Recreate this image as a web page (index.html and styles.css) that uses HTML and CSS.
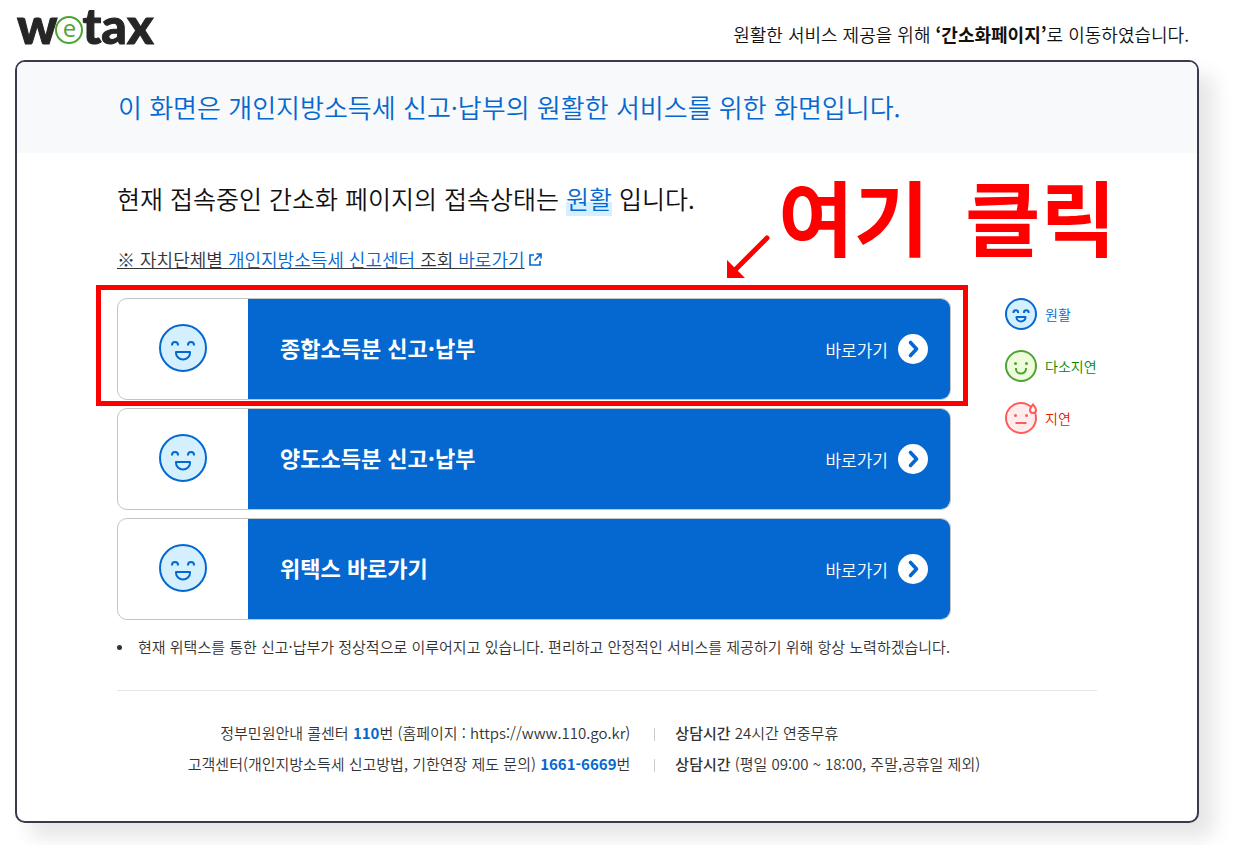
FILE: index.html
```html
<!DOCTYPE html>
<html lang="ko">
<head>
    <meta charset="UTF-8" />
    <meta name="viewport" content="width=device-width, initial-scale=1.0" />
    <title>위택스</title>
    <link rel="stylesheet" href="styles.css">
</head>
<body>

    <!-- Shared icons -->
    <svg class="defs" width="0" height="0" aria-hidden="true">
        <symbol id="face-good" viewBox="0 0 48 48">
            <circle cx="24" cy="24" r="23" fill="#d4f0ff" stroke="#0568d0" stroke-width="2" />
            <path d="M13 21.5v-.5a3 3 0 0 1 6 0v.5M29 21.5v-.5a3 3 0 0 1 6 0v.5" fill="none" stroke="#0568d0" stroke-width="2" />
            <path d="M17 28h14v1a7 6.5 0 0 1-14 0z" fill="#d4f0ff" stroke="#0568d0" stroke-width="2" stroke-linejoin="round" />
        </symbol>
        <symbol id="arrow-circle" viewBox="0 0 30 30">
            <circle cx="15" cy="15" r="15" fill="#fff" />
            <path d="M12.500 8.500l6 6.500-6 6.500" fill="none" stroke="#0568d0" stroke-width="3.600" stroke-linecap="round" stroke-linejoin="round" />
        </symbol>
    </svg>

    <!-- Header -->
    <header class="header">
        <h1 class="logo" aria-label="wetax"><span>w</span><span class="logo-e">e</span><span>tax</span></h1>
        <p class="notice">원활한 서비스 제공을 위해 <strong>‘간소화페이지’</strong>로 이동하였습니다.</p>
    </header>

    <!-- Main panel -->
    <main class="panel">
        <p class="banner">이 화면은 개인지방소득세 신고·납부의 원활한 서비스를 위한 화면입니다.</p>

        <div class="content">
            <h2 class="status">현재 접속중인 간소화 페이지의 접속상태는 <em>원활</em> 입니다.</h2>

            <a class="center-link" href="#">
                <span class="center-text">※ 자치단체별 <b>개인지방소득세 신고센터</b> 조회 <b>바로가기</b></span>
                <svg width="13" height="13" viewBox="0 0 13 13" fill="none" stroke="#0568d0" stroke-width="1.600">
                    <path d="M5 2H1v10h10V8M7.500 1H12v4.500M12 1L5.500 7.500" />
                </svg>
            </a>

            <div class="services">
                <ul class="service-list">
                    <li>
                        <a class="service" href="#">
                            <span class="service-face"><svg width="48" height="48"><use href="#face-good" /></svg></span>
                            <span class="service-body">
                                <strong>종합소득분 신고·납부</strong>
                                <span class="go">바로가기 <svg width="30" height="30"><use href="#arrow-circle" /></svg></span>
                            </span>
                        </a>
                        <div class="mark-box"></div>
                        <svg class="mark-arrow" width="45" height="45" viewBox="0 0 45 45">
                            <path d="M41 4L9 36" stroke="#f00" stroke-width="5" stroke-linecap="round" />
                            <path d="M1 26v18h18z" fill="#f00" />
                        </svg>
                        <p class="mark-text"><span>여기</span> <span>클릭</span></p>
                    </li>
                    <li>
                        <a class="service" href="#">
                            <span class="service-face"><svg width="48" height="48"><use href="#face-good" /></svg></span>
                            <span class="service-body">
                                <strong>양도소득분 신고·납부</strong>
                                <span class="go">바로가기 <svg width="30" height="30"><use href="#arrow-circle" /></svg></span>
                            </span>
                        </a>
                    </li>
                    <li>
                        <a class="service" href="#">
                            <span class="service-face"><svg width="48" height="48"><use href="#face-good" /></svg></span>
                            <span class="service-body">
                                <strong>위택스 바로가기</strong>
                                <span class="go">바로가기 <svg width="30" height="30"><use href="#arrow-circle" /></svg></span>
                            </span>
                        </a>
                    </li>
                </ul>

                <!-- Legend -->
                <ul class="legend">
                    <li class="good">
                        <svg width="32" height="32" viewBox="0 0 32 32" fill="none" stroke="#0568d0" stroke-width="2">
                            <circle cx="16" cy="16" r="15" fill="#d4f0ff" />
                            <path d="M8.500 15v-.5a2.300 2.300 0 0 1 4.600 0v.5M19 15v-.5a2.300 2.300 0 0 1 4.600 0v.5" />
                            <path d="M11.500 19h9v.5a4.500 4 0 0 1-9 0z" stroke-linejoin="round" />
                        </svg>
                        원활
                    </li>
                    <li class="slow">
                        <svg width="32" height="32" viewBox="0 0 32 32" fill="none" stroke="#4ea433" stroke-width="2">
                            <circle cx="16" cy="16" r="15" fill="#effcdb" />
                            <path d="M11 18v1a5 4.500 0 0 0 10 0v-1" />
                            <circle cx="10.500" cy="13.500" r="1.500" fill="#4ea433" stroke="none" />
                            <circle cx="21.500" cy="13.500" r="1.500" fill="#4ea433" stroke="none" />
                        </svg>
                        다소지연
                    </li>
                    <li class="delay">
                        <svg width="32" height="32" viewBox="0 0 32 32" fill="none" stroke="#ff5b5b" stroke-width="2">
                            <circle cx="16" cy="16" r="15" fill="#ffeded" />
                            <path d="M10.500 21h11" />
                            <circle cx="10.500" cy="13.500" r="1.500" fill="#ff5b5b" stroke="none" />
                            <circle cx="21.500" cy="13.500" r="1.500" fill="#ff5b5b" stroke="none" />
                            <path d="M28 2.500c-1.500 2-3 3.500-3 5.500a3 3 0 0 0 6 0c0-2-1.500-3.500-3-5.500z" fill="#fff" />
                        </svg>
                        지연
                    </li>
                </ul>
            </div>

            <p class="info">현재 위택스를 통한 신고·납부가 정상적으로 이루어지고 있습니다. 편리하고 안정적인 서비스를 제공하기 위해 항상 노력하겠습니다.</p>

            <footer class="contact">
                <p>정부민원안내 콜센터 <b>110</b>번 (홈페이지 : https://www.110.go.kr)</p>
                <p class="hours"><strong>상담시간</strong> 24시간 연중무휴</p>
                <p>고객센터(개인지방소득세 신고방법, 기한연장 제도 문의) <b>1661-6669</b>번</p>
                <p class="hours"><strong>상담시간</strong> (평일 09:00 ~ 18:00, 주말,공휴일 제외)</p>
            </footer>
        </div>
    </main>

</body>
</html>
```
FILE: styles.css
```css
* {
    margin: 0;
    padding: 0;
    box-sizing: border-box;
}

body {
    font-family: "Noto Sans CJK KR", sans-serif;
    font-weight: 350;
    color: #111;
    background: #fff;
}

ul {
    list-style: none;
}

a {
    color: inherit;
    text-decoration: none;
}

.defs {
    position: absolute;
}

.header {
    display: flex;
    justify-content: space-between;
    align-items: flex-start;
    height: 60px;
    padding: 0 46px 0 17px;
}

.logo {
    display: flex;
    font-family: Lato, sans-serif;
    font-size: 50px;
    font-weight: 900;
    line-height: 50px;
    color: #262626;
    -webkit-text-stroke: 1px #262626;
}

.logo-e {
    width: 28px;
    height: 28px;
    margin: 16px -1px 0 -2px;
    border: 2px solid #4ea433;
    border-radius: 50%;
    font-family: "Open Sans", sans-serif;
    font-size: 24px;
    font-weight: 400;
    line-height: 20px;
    text-align: center;
    color: #4ea433;
    -webkit-text-stroke: 0;
}

.notice {
    padding-top: 19px;
    font-size: 18px;
    line-height: 30px;
}

.panel {
    margin: 0 36px 22px 15px;
    border: 2px solid #3a3a4c;
    border-radius: 10px;
    background: #fff;
    box-shadow: 15px 15px 20px rgba(0, 0, 0, 0.1);
}

.banner {
    padding: 25px 101px 26px;
    border-radius: 8px 8px 0 0;
    font-size: 26px;
    line-height: 40px;
    color: #0568d0;
    background: #f8f9fb;
}

.content {
    padding: 27px 100px 42px;
}

.status {
    font-size: 25px;
    font-weight: 350;
    line-height: 36px;
}

    .status em {
        font-style: normal;
        color: #0568d0;
        background: linear-gradient(transparent 60%, #d4f0ff 60%);
    }

.center-link {
    display: flex;
    align-items: center;
    gap: 4px;
    margin: 30px 0 26px;
    font-size: 18px;
    line-height: 26px;
    color: #333;
}

    .center-link b {
        font-weight: 350;
        color: #0568d0;
    }

.center-text {
    text-decoration: underline;
    text-decoration-skip-ink: none;
}

.services {
    display: grid;
    grid-template-columns: 1fr 92px;
    gap: 54px;
}

.service-list {
    display: grid;
    gap: 8px;
}

    .service-list li {
        position: relative;
    }

.service {
    display: flex;
    height: 102px;
    border: 1px solid #c4c4c4;
    border-radius: 10px;
    overflow: hidden;
}

.service-face {
    display: flex;
    flex: 0 0 130px;
    justify-content: center;
    align-items: center;
    padding-bottom: 2px;
}

.service-body {
    display: flex;
    flex: 1;
    justify-content: space-between;
    align-items: center;
    padding: 0 22px 0 32px;
    color: #fff;
    background: #0568d0;
}

    .service-body strong {
        padding-bottom: 4px;
        font-size: 22px;
        font-weight: 700;
    }

.go {
    display: flex;
    align-items: center;
    gap: 10px;
    font-size: 17px;
}

.mark-box {
    position: absolute;
    inset: -13px -17px -6px -21px;
    border: 5px solid #f00;
    pointer-events: none;
}

.mark-arrow {
    position: absolute;
    top: -64px;
    right: 180px;
}

.mark-text {
    display: flex;
    gap: 36px;
    position: absolute;
    top: -133px;
    right: -165px;
    font-size: 82px;
    font-weight: 700;
    line-height: 100px;
    white-space: nowrap;
    color: #f00;
}

.legend {
    display: flex;
    flex-direction: column;
    gap: 20px;
}

    .legend li {
        display: flex;
        align-items: center;
        gap: 8px;
        font-size: 14px;
        line-height: 32px;
        white-space: nowrap;
    }

.good {
    color: #0568d0;
}

.slow {
    color: #008a00;
}

.delay {
    color: #e02000;
}

.info {
    display: flex;
    align-items: center;
    gap: 16px;
    margin-top: 15px;
    font-size: 15px;
    line-height: 24px;
    color: #333;
}

    .info::before {
        content: "";
        width: 5px;
        height: 5px;
        border-radius: 50%;
        background: #333;
    }

.contact {
    display: grid;
    grid-template-columns: 11fr 10fr;
    margin-top: 31px;
    padding-top: 26px;
    border-top: 1px solid #e5e5e5;
    font-size: 15px;
    line-height: 31px;
    text-align: right;
    color: #333;
}

    .contact b {
        font-weight: 700;
        color: #0568d0;
    }

    .contact strong {
        font-weight: 500;
    }

    .contact .hours {
        text-align: left;
    }

.hours::before {
    content: "";
    display: inline-block;
    width: 1px;
    height: 13px;
    margin: 0 20px 0 24px;
    vertical-align: -2px;
    background: #ccc;
}
```
